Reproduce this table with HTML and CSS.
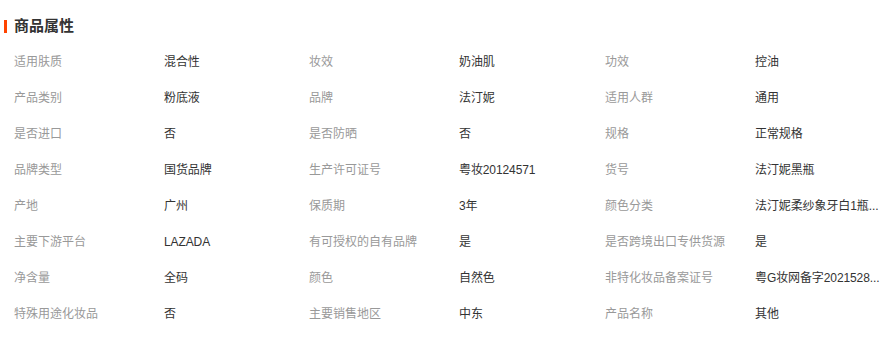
FILE: index.html
```html
<!DOCTYPE html>
<html lang="zh-CN">
<head>
<meta charset="utf-8">
<title>商品属性</title>
<link rel="stylesheet" href="styles.css">
</head>
<body>
<div class="attrs">
  <h2 class="attrs-title"><span class="bar"></span>商品属性</h2>
  <div class="attrs-grid">
    <span class="k">适用肤质</span><span class="v">混合性</span>
    <span class="k">妆效</span><span class="v">奶油肌</span>
    <span class="k">功效</span><span class="v">控油</span>

    <span class="k">产品类别</span><span class="v">粉底液</span>
    <span class="k">品牌</span><span class="v">法汀妮</span>
    <span class="k">适用人群</span><span class="v">通用</span>

    <span class="k">是否进口</span><span class="v">否</span>
    <span class="k">是否防晒</span><span class="v">否</span>
    <span class="k">规格</span><span class="v">正常规格</span>

    <span class="k">品牌类型</span><span class="v">国货品牌</span>
    <span class="k">生产许可证号</span><span class="v">粤妆20124571</span>
    <span class="k">货号</span><span class="v">法汀妮黑瓶</span>

    <span class="k">产地</span><span class="v">广州</span>
    <span class="k">保质期</span><span class="v">3年</span>
    <span class="k">颜色分类</span><span class="v">法汀妮柔纱象牙白1瓶...</span>

    <span class="k">主要下游平台</span><span class="v">LAZADA</span>
    <span class="k">有可授权的自有品牌</span><span class="v">是</span>
    <span class="k">是否跨境出口专供货源</span><span class="v">是</span>

    <span class="k">净含量</span><span class="v">全码</span>
    <span class="k">颜色</span><span class="v">自然色</span>
    <span class="k">非特化妆品备案证号</span><span class="v">粤G妆网备字2021528...</span>

    <span class="k">特殊用途化妆品</span><span class="v">否</span>
    <span class="k">主要销售地区</span><span class="v">中东</span>
    <span class="k">产品名称</span><span class="v">其他</span>
  </div>
</div>
</body>
</html>
```
FILE: styles.css
```css
html, body {
  margin: 0;
  padding: 0;
  background: #fff;
}
body {
  font-family: "Liberation Sans", "Noto Sans CJK SC", sans-serif;
  font-size: 12px;
  color: #333;
}
.attrs {
  padding: 16px 0 0 4px;
}
.attrs-title {
  display: flex;
  align-items: center;
  gap: 7px;
  margin: 0;
  height: 20px;
  font-size: 15px;
  font-weight: bold;
  color: #333;
  line-height: 20px;
}
.attrs-title .bar {
  width: 3px;
  height: 13px;
  background: #ff4400;
}
.attrs-grid {
  display: grid;
  grid-template-columns: 150px 145px 150px 146px 150px 136px;
  grid-auto-rows: 36px;
  margin: 8px 0 0 10px;
  align-items: center;
}
.k, .v {
  white-space: nowrap;
  line-height: 36px;
}
.k {
  color: #999;
}
.v {
  color: #333;
  letter-spacing: -0.1px;
}
```
